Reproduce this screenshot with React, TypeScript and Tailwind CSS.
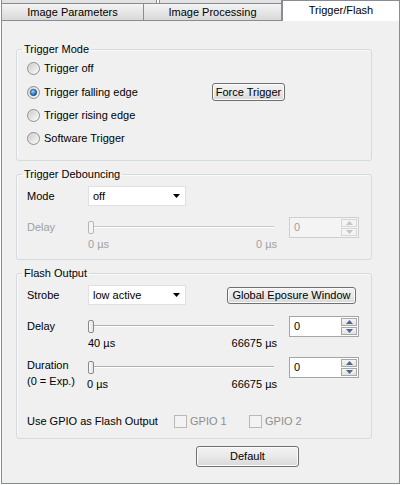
import React from 'react'

function Radio({ checked, label, width }: { checked?: boolean; label: string; width?: string }) {
  return (
    <div className={`flex items-center gap-[4px] ${width ?? ''}`}>
      <svg width="13" height="13" viewBox="0 0 13 13" className="shrink-0">
        <defs>
          <linearGradient id="radioRing" x1="0" y1="0" x2="1" y2="1">
            <stop offset="0" stopColor="#d2d2d2" />
            <stop offset="1" stopColor="#fbfbfb" />
          </linearGradient>
          <linearGradient id="radioIn" x1="0" y1="0" x2="1" y2="1">
            <stop offset="0" stopColor="#cfcfcf" />
            <stop offset="1" stopColor="#f6f6f6" />
          </linearGradient>
          <radialGradient id="radioDot" cx="0.4" cy="0.35" r="0.7">
            <stop offset="0" stopColor="#9fd6fb" />
            <stop offset="0.6" stopColor="#2a83cf" />
            <stop offset="1" stopColor="#144b8a" />
          </radialGradient>
        </defs>
        <circle cx="6.5" cy="6.5" r="6" fill="url(#radioRing)" stroke="#8e8f8f" strokeWidth="1" />
        <circle cx="6.5" cy="6.5" r="4" fill="url(#radioIn)" />
        {checked && <circle cx="6.5" cy="6.5" r="3.2" fill="url(#radioDot)" stroke="#1b3d66" strokeWidth="0.6" />}
      </svg>
      <span>{label}</span>
    </div>
  )
}

function Btn({ label, className }: { label: string; className: string }) {
  return (
    <div
      className={`flex items-center justify-center border border-[#707070] rounded-[3px] bg-gradient-to-b from-[#f3f3f3] via-[#e9e9e9] to-[#d8d8d8] shadow-[inset_0_0_0_1px_#fcfcfc] ${className}`}
    >
      {label}
    </div>
  )
}

function Combo({ value }: { value: string }) {
  return (
    <div className="flex items-center justify-between w-[98px] h-[20px] border border-[#e0e0e0] bg-white pl-[4px] pr-[5px]">
      <span>{value}</span>
      <svg width="7" height="4" viewBox="0 0 7 4">
        <path d="M0 0 H7 L3.5 4 Z" fill="#000" />
      </svg>
    </div>
  )
}

function Slider({ disabled }: { disabled?: boolean }) {
  return (
    <div className="relative w-[186px] h-[20px]">
      <div
        className={`absolute left-0 right-0 top-[9px] h-[2px] border-t border-b border-b-white ${disabled ? 'border-t-[#c8c8c8]' : 'border-t-[#b0b0b0]'}`}
      />
      <div
        className={`absolute left-0 top-[4px] w-[6px] h-[13px] rounded-[2px] border ${disabled ? 'border-[#b5b5b5] bg-[#f4f4f4]' : 'border-[#8a8a8a] bg-gradient-to-r from-[#fbfbfb] to-[#e2e2e2]'}`}
      />
    </div>
  )
}

function Arrow({ up, disabled }: { up?: boolean; disabled?: boolean }) {
  return (
    <div
      className={`flex-1 flex items-center justify-center border ${disabled ? 'border-[#d6d6d6] bg-[#f4f4f4]' : 'border-[#a8a8a8] bg-gradient-to-b from-[#f6f6f6] to-[#e2e2e2]'}`}
    >
      <svg width="7" height="4" viewBox="0 0 7 4">
        <path d={up ? 'M0 4 H7 L3.5 0 Z' : 'M0 0 H7 L3.5 4 Z'} fill={disabled ? '#c0c4cc' : '#4f6696'} />
      </svg>
    </div>
  )
}

function Spin({ disabled }: { disabled?: boolean }) {
  return (
    <div
      className={`ml-[15px] flex w-[70px] h-[21px] border ${disabled ? 'border-[#cfcfcf] bg-[#f4f4f4] text-[#a0a0a0]' : 'border-[#a5a5a5] bg-white'}`}
    >
      <span className="flex-1 flex items-center pl-[4px]">0</span>
      <div className="flex flex-col gap-[1px] w-[16px] my-[1px] mr-[1px]">
        <Arrow up disabled={disabled} />
        <Arrow disabled={disabled} />
      </div>
    </div>
  )
}

function Check({ label }: { label: string }) {
  return (
    <div className="flex items-center gap-[3px] w-[75px] text-[#8d8d8d]">
      <div className="w-[13px] h-[13px] border border-[#b8b8b8] bg-[#f3f3f3]" />
      <span>{label}</span>
    </div>
  )
}

function Group({ title, className, children }: { title: string; className: string; children: React.ReactNode }) {
  return (
    <fieldset
      className={`ml-[14px] w-[356px] border border-[#d3dbe1] rounded-[3px] shadow-[inset_1px_1px_0_#fafafa] ${className}`}
    >
      <legend className="ml-[5px] px-[2px] leading-[13px]">{title}</legend>
      <div className="pl-[10px]">{children}</div>
    </fieldset>
  )
}

export default function App(): React.JSX.Element {
  return (
    <div className="w-[402px] h-[485px] bg-white font-['Liberation_Sans',Arial,sans-serif] text-[11px] leading-[13px] text-black">
      {/* Tabs */}
      <div className="flex ml-[1px] w-[399px] h-[21px]">
        <div className="flex flex-col w-[281px]">
          <div className="flex h-[3px]">
            <div className="w-[156px] border-x border-[#898c95] bg-[#e2e2e2]" />
            <div className="w-[2px]" />
            <div className="flex-1 border-x border-[#898c95] bg-[#e2e2e2]" />
          </div>
          <div className="flex h-[18px] border-b border-[#898c95]">
            <div className="w-[143px] flex items-center justify-center border-t border-x border-[#898c95] bg-gradient-to-b from-[#f4f4f4] to-[#d9d9d9]">
              Image Parameters
            </div>
            <div className="w-[138px] flex items-center justify-center border-t border-r border-[#898c95] bg-gradient-to-b from-[#f4f4f4] to-[#d9d9d9]">
              Image Processing
            </div>
          </div>
        </div>
        <div className="w-[118px] h-[21px] flex justify-center pt-[3px] bg-white border-t border-x border-[#898c95]">
          Trigger/Flash
        </div>
      </div>

      {/* Panel */}
      <div className="ml-[1px] w-[399px] h-[463px] border-x border-b border-[#898c95] bg-[#f0f0f0] flex flex-col">
        <Group title="Trigger Mode" className="mt-[22px] pb-[10px]">
          <div className="flex flex-col pt-[1px]">
            <div className="h-[23px] flex items-center">
              <Radio label="Trigger off" />
            </div>
            <div className="h-[24px] flex items-center">
              <Radio checked label="Trigger falling edge" width="w-[185px]" />
              <Btn label="Force Trigger" className="w-[73px] h-[18px]" />
            </div>
            <div className="h-[23px] flex items-center">
              <Radio label="Trigger rising edge" />
            </div>
            <div className="h-[23px] flex items-center">
              <Radio label="Software Trigger" />
            </div>
          </div>
        </Group>

        <Group title="Trigger Debouncing" className="mt-[7px] pb-[8px]">
          <div className="flex items-center mt-[5px] h-[20px]">
            <span className="w-[61px]">Mode</span>
            <Combo value="off" />
          </div>
          <div className="flex items-center mt-[11px] h-[20px] text-[#a0a0a0]">
            <span className="w-[61px]">Delay</span>
            <Slider disabled />
            <Spin disabled />
          </div>
          <div className="flex mt-[1px] h-[13px] text-[#a0a0a0]">
            <div className="ml-[61px] w-[189px] flex justify-between">
              <span>0 µs</span>
              <span>0 µs</span>
            </div>
          </div>
        </Group>

        <Group title="Flash Output" className="mt-[7px] pb-[7px]">
          <div className="flex items-center mt-[5px] h-[20px]">
            <span className="w-[61px]">Strobe</span>
            <Combo value="low active" />
            <Btn label="Global Eposure Window" className="ml-[41px] w-[129px] h-[17px]" />
          </div>
          <div className="flex items-center mt-[11px] h-[20px]">
            <span className="w-[61px]">Delay</span>
            <Slider />
            <Spin />
          </div>
          <div className="flex mt-[1px] h-[13px]">
            <div className="ml-[61px] w-[189px] flex justify-between">
              <span>40 µs</span>
              <span>66675 µs</span>
            </div>
          </div>
          <div className="flex mt-[7px]">
            <div className="w-[61px] flex flex-col leading-[16px]">
              <span>Duration</span>
              <span className="whitespace-nowrap">(0 = Exp.)</span>
            </div>
            <div className="flex flex-col">
              <div className="flex items-center h-[20px]">
                <Slider />
                <Spin />
              </div>
              <div className="w-[189px] h-[13px] mt-[1px] flex justify-between">
                <span className="-ml-[1px]">0 µs</span>
                <span>66675 µs</span>
              </div>
            </div>
          </div>
          <div className="flex items-center mt-[20px] h-[20px]">
            <span className="w-[147px]">Use GPIO as Flash Output</span>
            <Check label="GPIO 1" />
            <Check label="GPIO 2" />
          </div>
        </Group>

        <Btn label="Default" className="ml-[194px] mt-[7px] w-[103px] h-[21px]" />
      </div>
    </div>
  )
}
